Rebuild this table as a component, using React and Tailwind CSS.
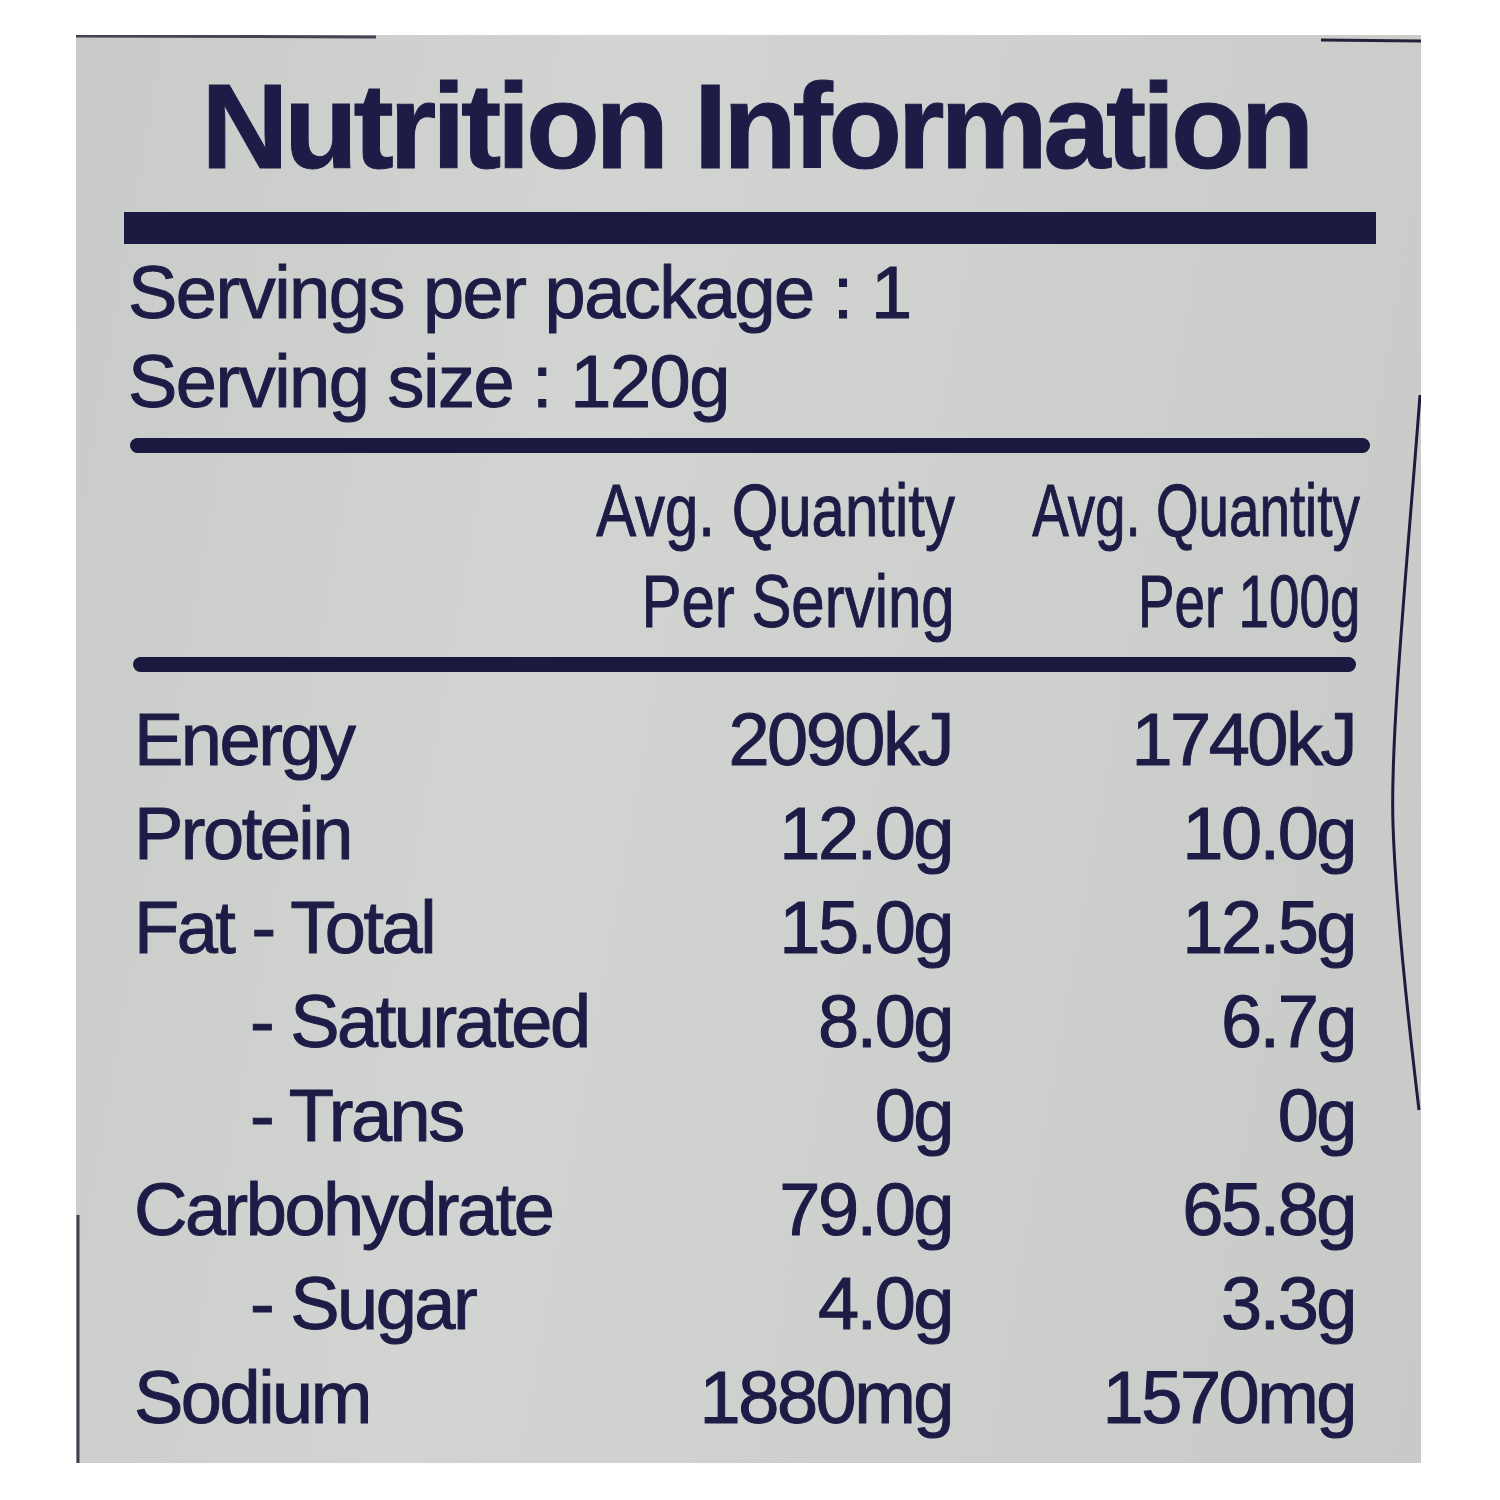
import React from "react";

const rows = [
  { label: "Energy", serving: "2090kJ", per100: "1740kJ" },
  { label: "Protein", serving: "12.0g", per100: "10.0g" },
  { label: "Fat - Total", serving: "15.0g", per100: "12.5g" },
  { label: "- Saturated", serving: "8.0g", per100: "6.7g", sub: true },
  { label: "- Trans", serving: "0g", per100: "0g", sub: true },
  { label: "Carbohydrate", serving: "79.0g", per100: "65.8g" },
  { label: "- Sugar", serving: "4.0g", per100: "3.3g", sub: true },
  { label: "Sodium", serving: "1880mg", per100: "1570mg" },
];

function HeadCell({ lines, narrow }) {
  return (
    <div className="flex flex-col items-end">
      {lines.map((line) => (
        <span
          key={line}
          className={
            "inline-block whitespace-nowrap h-[91px] leading-[91px] origin-right " +
            (narrow ? "scale-x-[0.74]" : "scale-x-[0.81]")
          }
        >
          {line}
        </span>
      ))}
    </div>
  );
}

export default function App() {
  return (
    <div className="w-[1500px] h-[1500px] bg-white pt-[35px] pl-[76px] font-['Liberation_Sans',Arial,sans-serif] text-[#1e1b46]">
      <div className="relative w-[1345px] h-[1428px] bg-[linear-gradient(100deg,#c9cbc9_0%,#d2d4d2_35%,#cdcfcd_70%,#c8cac8_100%)]">
        {/* edges of the label / package fold */}
        <svg className="absolute inset-0 pointer-events-none" width="1345" height="1428" viewBox="0 0 1345 1428">
          <path d="M-3 1 L300 2" stroke="#24223a" strokeWidth="3" opacity="0.8" />
          <path d="M1245 5 L1345 6" stroke="#24223a" strokeWidth="3" fill="none" />
          <path d="M2 1180 L2 1428" stroke="#2a2838" strokeWidth="3" opacity="0.85" />
          <path d="M1344 360 C1332 520, 1314 700, 1317 790 S1334 1000, 1343 1075" stroke="#1e1b3f" strokeWidth="3" fill="none" />
        </svg>

        <div className="relative flex flex-col pt-[29px] [-webkit-text-stroke:1px_#1e1b46]">
          <h1 className="h-[124px] leading-[124px] text-[121px] font-bold tracking-[-4.5px] text-center pl-[14px]">
            Nutrition Information
          </h1>

          <div className="mt-[24px] ml-[48px] w-[1252px] h-[32px] bg-[#1c1940]" />

          <div className="mt-[4px] ml-[52px] text-[74px] tracking-[-1.5px]">
            <p className="h-[89px] leading-[89px]">Servings per package : 1</p>
            <p className="h-[89px] leading-[89px]">Serving size : 120g</p>
          </div>

          <div className="mt-[12px] ml-[54px] w-[1240px] h-[15px] rounded-full bg-[#1c1940]" />

          <div className="mt-[12px] ml-[58px] grid grid-cols-[461px_360px_405px] text-[74px]">
            <div />
            <HeadCell lines={["Avg. Quantity", "Per Serving"]} />
            <HeadCell lines={["Avg. Quantity", "Per 100g"]} narrow />
          </div>

          <div className="mt-[10px] ml-[57px] w-[1223px] h-[15px] rounded-full bg-[#1c1940]" />

          <div className="mt-[21px] ml-[58px] w-[1221px] text-[74px] tracking-[-2.5px]">
            {rows.map((row) => (
              <div key={row.label} className="grid grid-cols-[460px_358px_403px] h-[94px] leading-[94px]">
                <span className={row.sub ? "pl-[116px] whitespace-nowrap" : "whitespace-nowrap"}>{row.label}</span>
                <span className="text-right">{row.serving}</span>
                <span className="text-right">{row.per100}</span>
              </div>
            ))}
          </div>
        </div>
      </div>
    </div>
  );
}
